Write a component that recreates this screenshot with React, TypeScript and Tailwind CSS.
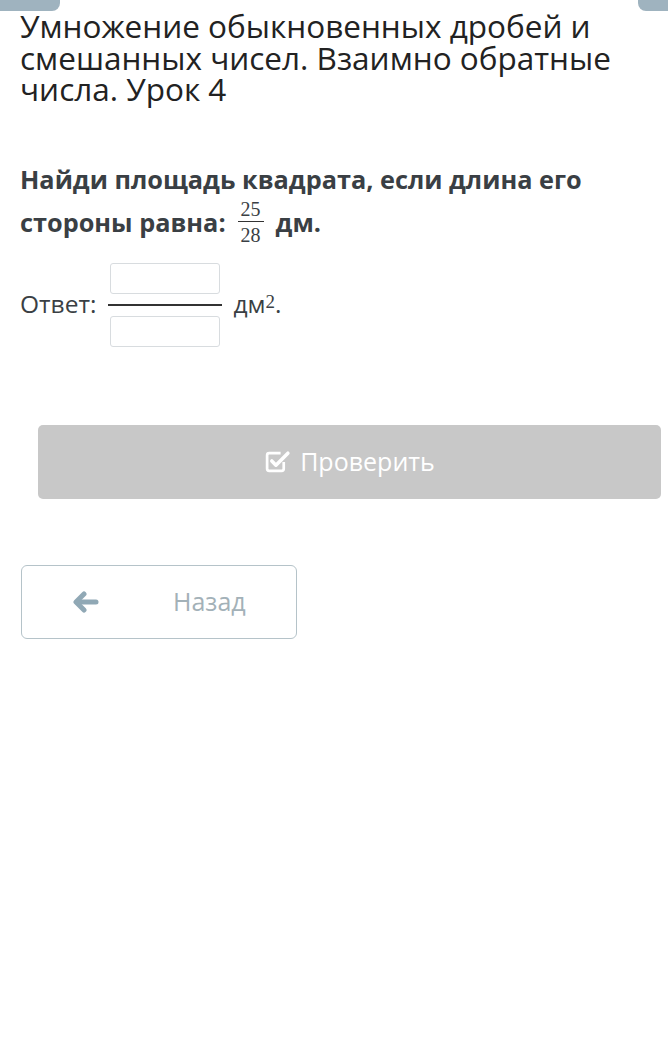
import React from 'react';

const FONT = { fontFamily: '"Open Sans", "Noto Sans", sans-serif' };
const SERIF = { fontFamily: '"Liberation Serif", "DejaVu Serif", serif' };

function Fraction({ num, den }: { num: string; den: string }) {
  return (
    <span className="inline-flex flex-col items-center align-middle mx-[12px] leading-none" style={SERIF}>
      <span className="text-[20px] font-normal pb-[2px]">{num}</span>
      <span className="w-[26px] h-[1.5px] bg-[#333]" />
      <span className="text-[20px] font-normal pt-[3px]">{den}</span>
    </span>
  );
}

function CheckSquare() {
  return (
    <svg width="27" height="27" viewBox="0 0 26 26" fill="none">
      <path d="M19 13.5v6.5a2 2 0 0 1-2 2H5a2 2 0 0 1-2-2V7a2 2 0 0 1 2-2h11" stroke="white" strokeWidth="2.6" />
      <path d="M7.5 12.5l4 4L23 5" stroke="white" strokeWidth="3.4" strokeLinecap="round" strokeLinejoin="round" />
    </svg>
  );
}

function ArrowLeft() {
  return (
    <svg width="26" height="22" viewBox="0 0 26 22" fill="none">
      <path d="M11 3L3 11l8 8" stroke="#90a8b5" strokeWidth="5" strokeLinecap="round" strokeLinejoin="round" />
      <path d="M4 11h19" stroke="#90a8b5" strokeWidth="5" strokeLinecap="round" />
    </svg>
  );
}

export default function App() {
  return (
    <div className="relative w-[668px] h-[1060px] bg-white overflow-hidden" style={FONT}>
      {/* top tabs */}
      <div className="absolute left-0 top-0 w-[60px] h-[11px] bg-[#9fb3bf] rounded-br-[8px]" />
      <div className="absolute right-0 top-0 w-[30px] h-[11px] bg-[#9fb3bf] rounded-bl-[8px]" />

      <div className="pt-[10px] px-[20px]">
        <h1 className="text-[31.5px] leading-[31.5px] text-[#222] font-normal">
          Умножение обыкновенных дробей и смешанных чисел. Взаимно обратные числа. Урок 4
        </h1>

        <div className="mt-[54px] text-[25.3px] font-bold text-[#3a3f44] leading-[40px]">
          <div>Найди площадь квадрата, если длина его</div>
          <div className="flex items-center">
            <span>стороны равна:</span>
            <Fraction num="25" den="28" />
            <span>дм.</span>
          </div>
        </div>

        <div className="mt-[18px] flex items-center text-[24.5px] text-[#3a3f44]">
          <span className="mr-[12px]">Ответ:</span>
          <div className="flex flex-col items-center">
            <div className="w-[110px] h-[31px] border border-[#d8dcdf] rounded-[3px]" />
            <div className="w-[114px] h-[1.5px] bg-[#333] my-[10px]" />
            <div className="w-[110px] h-[31px] border border-[#d8dcdf] rounded-[3px]" />
          </div>
          <span className="ml-[11px]">
            дм<sup className="text-[19px] relative -top-[5px]" style={SERIF}>2</sup>.
          </span>
        </div>
      </div>

      <div className="pl-[38px] pr-[7px] mt-[78px]">
        <div className="h-[74px] bg-[#c8c8c8] rounded-[5px] flex items-center justify-center gap-[9px] text-white text-[25px]">
          <CheckSquare />
          <span>Проверить</span>
        </div>
      </div>

      <div className="pl-[21px] mt-[66px]">
        <div className="w-[276px] h-[74px] border border-[#b5c3c9] rounded-[6px] flex items-center text-[25px] text-[#a3b1b8]">
          <span className="ml-[51px]"><ArrowLeft /></span>
          <span className="ml-[74px]">Назад</span>
        </div>
      </div>
    </div>
  );
}
